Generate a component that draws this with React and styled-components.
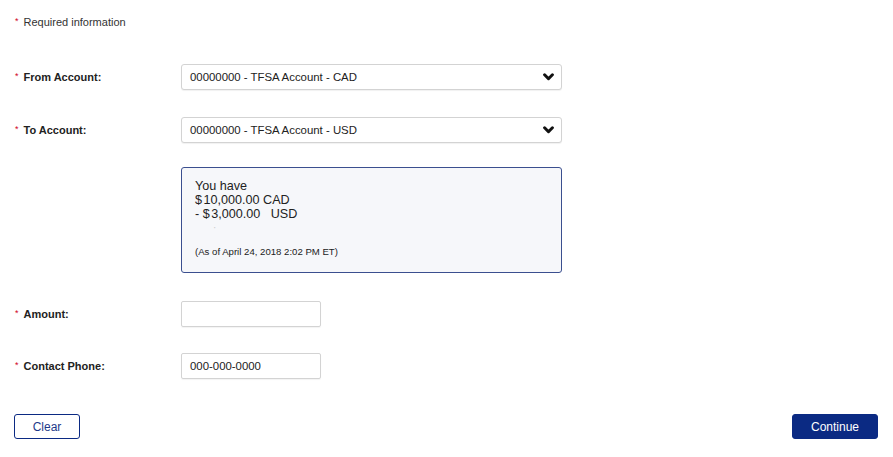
import React from "react";
import styled, { createGlobalStyle } from "styled-components";

const Global = createGlobalStyle`
  html, body { margin: 0; padding: 0; background: #fff; }
  body { font-family: "Liberation Sans", Arial, sans-serif; color: #222; }
`;

const Page = styled.div`
  padding: 16px 15px 0 14px;
  display: flex;
  flex-direction: column;
`;

const Required = styled.div`
  font-size: 11px;
  line-height: 13px;
  color: #333;
`;

const Star = styled.span`
  color: #d0021b;
  font-weight: normal;
  margin-right: 5px;
  margin-left: 1px;
  font-size: 9px;
  position: relative;
  top: -2px;
`;

const Row = styled.div`
  display: grid;
  grid-template-columns: 167px 1fr;
  align-items: center;
  margin-top: ${(p) => p.$gap}px;
`;

const Label = styled.div`
  font-size: 11px;
  font-weight: bold;
  color: #222;
`;

const Select = styled.div`
  width: 381px;
  height: 26px;
  box-sizing: border-box;
  border: 1px solid #d3d3d3;
  border-radius: 3px;
  box-shadow: 0 1px 1px rgba(0, 0, 0, 0.06);
  background: #fff;
  display: flex;
  align-items: center;
  justify-content: space-between;
  padding: 0 7px 0 8px;
  font-size: 11.4px;
  color: #222;
`;

const InfoBox = styled.div`
  width: 381px;
  box-sizing: border-box;
  border: 1px solid #3b4f8f;
  border-radius: 3px;
  background: #f6f7fa;
  padding: 11px 13px 14px 13px;
  display: flex;
  flex-direction: column;
`;

const Line = styled.div`
  font-size: 12.6px;
  line-height: 14px;
  color: #222;
  white-space: pre;
`;

const Dollar = styled.span`
  margin-right: 1.5px;
`;

const Dot = styled.div`
  height: 14px;
  padding-left: 18px;
  font-size: 10px;
  line-height: 14px;
  color: #ccc;
`;

const AsOf = styled.div`
  margin-top: 11px;
  font-size: 9.6px;
  line-height: 12px;
  color: #222;
`;

const Input = styled.div`
  width: 140px;
  height: 26px;
  box-sizing: border-box;
  border: 1px solid #d3d3d3;
  border-radius: 2px;
  box-shadow: 0 1px 1px rgba(0, 0, 0, 0.05);
  display: flex;
  align-items: center;
  padding-left: 8px;
  font-size: 11.4px;
  color: #222;
`;

const Actions = styled.div`
  display: flex;
  justify-content: space-between;
  margin-top: 35px;
`;

const Button = styled.button`
  height: 25px;
  width: ${(p) => p.$w}px;
  box-sizing: border-box;
  border-radius: 3px;
  border: 1px solid #0b2a83;
  background: ${(p) => (p.$primary ? "#0b2a83" : "#fff")};
  color: ${(p) => (p.$primary ? "#fff" : "#1d3a8a")};
  font-family: "Liberation Sans", Arial, sans-serif;
  font-size: 12px;
  padding: 0;
  cursor: pointer;
`;

const Chevron = () => (
  <svg width="11" height="8" viewBox="0 0 11 8">
    <path d="M1.6 1.8 L5.5 5.7 L9.4 1.8" fill="none" stroke="#111" strokeWidth="3" strokeLinecap="round" strokeLinejoin="round" />
  </svg>
);

export default function App() {
  return (
    <Page>
      <Global />
      <Required>
        <Star>*</Star>Required information
      </Required>

      <Row $gap={34}>
        <Label><Star>*</Star>From Account:</Label>
        <Select>
          <span>00000000 - TFSA Account - CAD</span>
          <Chevron />
        </Select>
      </Row>

      <Row $gap={27}>
        <Label><Star>*</Star>To Account:</Label>
        <Select>
          <span>00000000 - TFSA Account - USD</span>
          <Chevron />
        </Select>
      </Row>

      <Row $gap={24}>
        <div />
        <InfoBox>
          <Line>You have</Line>
          <Line><Dollar>$</Dollar>10,000.00 CAD</Line>
          <Line>{"- "}<Dollar>$</Dollar>{"3,000.00   USD"}</Line>
          <Dot>·</Dot>
          <AsOf>(As of April 24, 2018 2:02 PM ET)</AsOf>
        </InfoBox>
      </Row>

      <Row $gap={28}>
        <Label><Star>*</Star>Amount:</Label>
        <Input />
      </Row>

      <Row $gap={26}>
        <Label><Star>*</Star>Contact Phone:</Label>
        <Input>000-000-0000</Input>
      </Row>

      <Actions>
        <Button $w={66}>Clear</Button>
        <Button $w={86} $primary>Continue</Button>
      </Actions>
    </Page>
  );
}
